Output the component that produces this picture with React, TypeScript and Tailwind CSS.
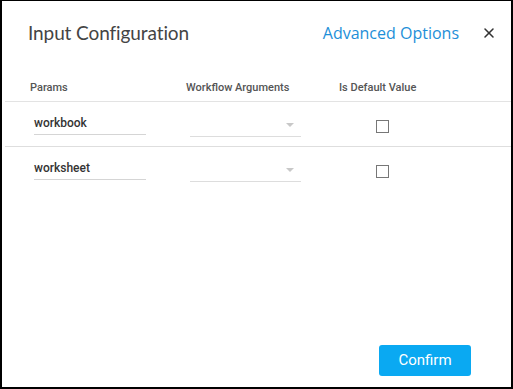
import { X } from "lucide-react";

const rows = ["workbook", "worksheet"];

export default function App() {
  return (
    <div className="h-[389px] w-[513px] bg-white">
      <div className="flex h-full w-full flex-col border-t border-r-2 border-b-2 border-l-2 border-black">
        {/* header */}
        <div className="flex items-center pl-[26px] pr-[14px] pt-[19px]">
          <h1 className="flex-1 font-['Lato',sans-serif] text-[19px] leading-[26px] tracking-[-0.1px] text-[#444]">
            Input Configuration
          </h1>
          <span className="font-['Open_Sans',sans-serif] text-[16px] leading-[26px] text-[#1d8fd8]">
            Advanced Options
          </span>
          <X className="ml-[22px] h-[16px] w-[16px] text-[#333]" strokeWidth={2.3} />
        </div>

        {/* table */}
        <div className="mt-[35px] font-['Roboto',sans-serif]">
          <div className="ml-[3px] grid grid-cols-[156px_153px_1fr] border-b border-[#e3e3e3] pb-[6px] pl-[25px] text-[11px] font-medium leading-[14px] text-[#555]">
            <span>Params</span>
            <span>Workflow Arguments</span>
            <span>Is Default Value</span>
          </div>
          {rows.map((name, i) => (
            <div
              key={name}
              className={`ml-[3px] grid h-[45px] grid-cols-[156px_152px_1fr] items-start pl-[29px] pt-[14px] ${
                i < rows.length - 1 ? "border-b border-[#dedede]" : ""
              }`}
            >
              <div className="w-[112px] border-b border-[#d5d5d5] pb-[4px] text-[12px] font-medium leading-[14px] text-[#333]">
                {name}
              </div>
              <div className="mt-[5px] flex h-[16px] w-[111px] items-start justify-end border-b border-[#ddd] pr-[7px]">
                <span className="mt-[2px] h-0 w-0 border-x-[4px] border-t-[4px] border-x-transparent border-t-[#c8c8c8]" />
              </div>
              <div className="ml-[34px] mt-[4px] h-[13px] w-[13px] border border-[#777]" />
            </div>
          ))}
        </div>

        <div className="flex flex-1 items-end justify-end pb-[11px] pr-[40px]">
          <button className="h-[31px] w-[92px] rounded-[3px] bg-[#0aa9f2] font-['Roboto',sans-serif] text-[15px] text-white">
            Confirm
          </button>
        </div>
      </div>
    </div>
  );
}
